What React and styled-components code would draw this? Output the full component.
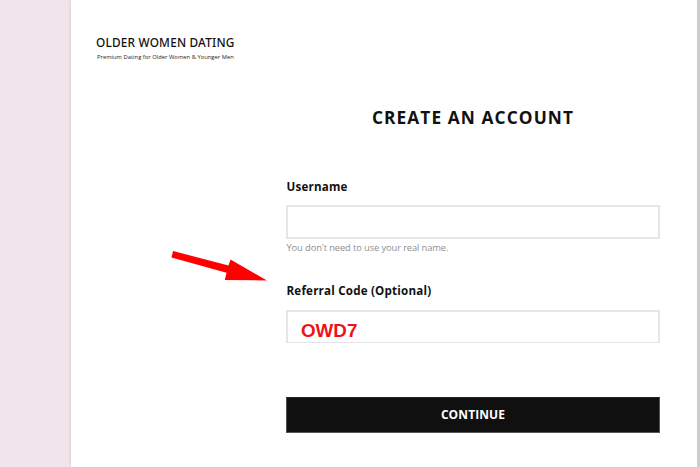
import React from 'react';
import styled, { createGlobalStyle } from 'styled-components';

const GlobalStyle = createGlobalStyle`
  * { box-sizing: border-box; }
  body { margin: 0; background: #f1e4ea; font-family: "Open Sans", sans-serif; color: #111; overflow: hidden; }
`;

const Page = styled.div`
  display: flex;
  height: 467px;
  padding-left: 71px;
  background: #f1e4ea;
`;

const Sheet = styled.main`
  position: relative;
  flex: 1;
  background: #fff;
  border-right: 3px solid #ccc;
  box-shadow: -1px 0 2px rgba(80, 50, 65, 0.1);
`;

const Brand = styled.header`
  height: 72px;
  padding: 34px 0 0 25px;
  white-space: nowrap;
`;

const BrandName = styled.div`
  font: 500 11.8px/17px "Noto Sans", sans-serif;
  letter-spacing: 0.2px;
`;

const Tagline = styled.div`
  padding-left: 1px;
  font: 400 5.8px/12px "Open Sans", sans-serif;
  letter-spacing: 0.02px;
  color: #222;
`;

const Form = styled.form`
  display: flex;
  flex-direction: column;
  width: 374px;
  margin-left: 215px;
`;

const Title = styled.h1`
  margin: 34px 0 0;
  font-size: 17.3px;
  line-height: 24px;
  font-weight: 700;
  letter-spacing: 1.1px;
  text-align: center;
  white-space: nowrap;
`;

const Field = styled.div`
  display: flex;
  flex-direction: column;
  margin-top: ${({ $gap }) => $gap}px;
`;

const Label = styled.label`
  height: 18px;
  margin-bottom: ${({ $space = 9 }) => $space}px;
  padding-left: 0.5px;
  font-size: 11.6px;
  line-height: 18px;
  font-weight: 700;
  letter-spacing: 0.2px;
`;

const Input = styled.input`
  width: 100%;
  height: ${({ $height = 34 }) => $height}px;
  padding: ${({ $offset = 0 }) => $offset}px 13px 0;
  border: 2px solid #e6e6e6;
  border-bottom-width: ${({ $bottom = 2 }) => $bottom}px;
  border-radius: 0;
  outline: none;
  background: #fff;
  color: #ee1218;
  font: 700 18.8px/22px "Liberation Sans", sans-serif;
`;

const Hint = styled.div`
  height: 17px;
  padding-left: 0.5px;
  font-size: 9.4px;
  line-height: 18px;
  letter-spacing: -0.13px;
  color: #909090;
`;

const Button = styled.button`
  height: 36px;
  margin-top: 54px;
  padding: 0;
  border: 1px solid #555;
  border-top-color: #222;
  background: #101010;
  color: #fff;
  font: 700 12px/34px "Open Sans", sans-serif;
  letter-spacing: 0.1px;
`;

const Pointer = styled.svg`
  position: absolute;
  left: 99px;
  top: 248px;
`;

export default function App() {
  return (
    <>
      <GlobalStyle />
      <Page>
        <Sheet>
          <Brand>
            <BrandName>OLDER WOMEN DATING</BrandName>
            <Tagline>Premium Dating for Older Women &amp; Younger Men</Tagline>
          </Brand>
          <Form onSubmit={(e) => e.preventDefault()}>
            <Title>CREATE AN ACCOUNT</Title>
            <Field $gap={48}>
              <Label htmlFor="username">Username</Label>
              <Input id="username" />
              <Hint>You don't need to use your real name.</Hint>
            </Field>
            <Field $gap={26}>
              <Label htmlFor="referral" $space={10}>Referral Code (Optional)</Label>
              <Input id="referral" defaultValue="OWD7" $offset={8} $height={33} $bottom={1} />
            </Field>
            <Button type="submit">CONTINUE</Button>
          </Form>
          <Pointer width="100" height="36" viewBox="0 0 100 36">
            <path d="M3 3 L58.5 17.5 L60.5 11.5 L97 32.5 L54.8 32 L56.5 24.8 L1.5 9.5 Z" fill="#f00" />
          </Pointer>
        </Sheet>
      </Page>
    </>
  );
}
